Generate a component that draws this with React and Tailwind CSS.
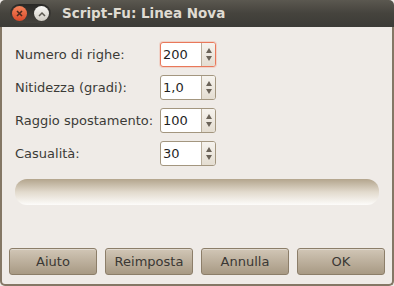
import React from 'react';

const rows = [
  { label: 'Numero di righe:', value: '200', focused: true },
  { label: 'Nitidezza (gradi):', value: '1,0' },
  { label: 'Raggio spostamento:', value: '100' },
  { label: 'Casualità:', value: '30' },
];

const SpinBox = ({ value, focused }) => (
  <div
    className={`flex h-[25px] w-[56px] rounded-[3px] border ${
      focused ? 'border-[#e9785a] shadow-[0_0_0_1px_rgba(240,140,110,0.25)]' : 'border-[#a3967f]'
    } bg-white overflow-hidden`}
  >
    <div className="flex flex-1 items-center pl-[2px] text-[13px] text-[#1f1f1f]">{value}</div>
    <div className="flex w-[14px] flex-col items-center justify-center gap-[3px] border-l border-[#b9ae9c] bg-gradient-to-b from-[#f6f3ee] to-[#e4ddd1] text-[#6b6358]">
      <svg width="6" height="5" viewBox="0 0 6 5"><path d="M3 0 L6 5 L0 5 Z" fill="currentColor" /></svg>
      <svg width="6" height="5" viewBox="0 0 6 5"><path d="M0 0 L6 0 L3 5 Z" fill="currentColor" /></svg>
    </div>
  </div>
);

const DialogButton = ({ children }) => (
  <button className="flex h-[27px] w-[88px] items-center justify-center rounded-[3px] border border-[#8c7e69] bg-gradient-to-b from-[#d1c6b6] to-[#a89a84] text-[13px] text-[#3a3834] shadow-[inset_0_1px_0_rgba(255,255,255,0.35)]">
    {children}
  </button>
);

export default function App() {
  return (
    <div className="flex h-[286px] w-[394px] flex-col bg-[#efebe7]" style={{ fontFamily: '"DejaVu Sans", sans-serif' }}>
      {/* title bar */}
      <div className="flex h-[27px] items-center rounded-t-[5px] bg-gradient-to-b from-[#5b5850] via-[#45433d] to-[#3c3b37]">
        <div className="ml-[10px] flex h-[19px] w-[41px] items-center justify-between rounded-full bg-gradient-to-b from-[#2a2926] to-[#45433e] px-[2px]">
          <div className="flex h-[15px] w-[15px] items-center justify-center rounded-full bg-gradient-to-b from-[#f5845a] to-[#d8482a]">
            <svg width="7" height="7" viewBox="0 0 7 7"><path d="M1 1 L6 6 M6 1 L1 6" stroke="#4a2a1e" strokeWidth="1.6" /></svg>
          </div>
          <div className="flex h-[15px] w-[15px] items-center justify-center rounded-full bg-gradient-to-b from-[#faf9f6] to-[#cfcbc3]">
            <svg width="8" height="6" viewBox="0 0 8 6"><path d="M1 5 L4 2 L7 5" fill="none" stroke="#5b5850" strokeWidth="1.5" /></svg>
          </div>
        </div>
        <div className="ml-[11px] text-[13.5px] font-bold text-[#dfdbd2]">Script-Fu: Linea Nova</div>
      </div>

      {/* content */}
      <div className="flex flex-1 flex-col rounded-b-[5px] border-x-2 border-b-2 border-[#847765] bg-[#efebe7]">
        <div className="flex flex-col gap-[8px] pl-[13px] pt-[15px]">
          {rows.map((r) => (
            <div key={r.label} className="flex items-center">
              <div className="w-[145px] text-[13px] text-[#3c3b37]">{r.label}</div>
              <SpinBox value={r.value} focused={r.focused} />
            </div>
          ))}
        </div>

        <div className="mx-[13px] mt-[13px] h-[26px] rounded-[12px] bg-gradient-to-b from-[#b3a58d] via-[#e2dacd] to-[#fdfcfa]" />

        <div className="mt-auto mb-[9px] flex gap-[8px] pl-[7px]">
          <DialogButton>Aiuto</DialogButton>
          <DialogButton>Reimposta</DialogButton>
          <DialogButton>Annulla</DialogButton>
          <DialogButton>OK</DialogButton>
        </div>
      </div>
    </div>
  );
}
